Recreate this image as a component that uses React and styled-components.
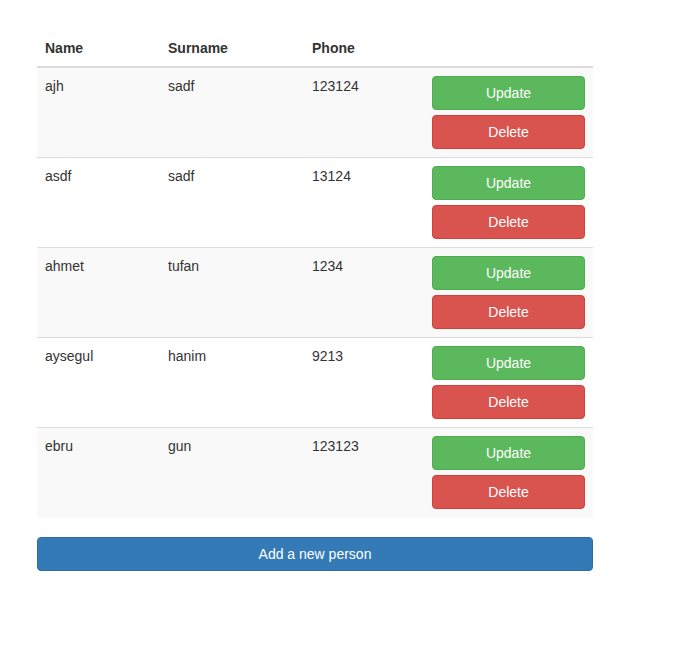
import React from "react";
import styled, { createGlobalStyle } from "styled-components";

const Global = createGlobalStyle`
  html, body { margin: 0; padding: 0; background: #fff; }
  body {
    font-family: "Liberation Sans", Arial, sans-serif;
    font-size: 14px;
    line-height: 1.42857143;
    color: #333;
  }
  * { box-sizing: border-box; }
`;

const Page = styled.div`
  padding: 30px 0 0 37px;
  width: 593px;
`;

const Table = styled.table`
  width: 556px;
  border-collapse: collapse;
  border-spacing: 0;
  table-layout: fixed;
`;

const Th = styled.th`
  text-align: left;
  font-weight: bold;
  padding: 8px;
  line-height: 20px;
  vertical-align: bottom;
  border-bottom: 2px solid #ddd;
  width: ${(p) => p.$w}px;
`;

const Tr = styled.tr`
  background: ${(p) => (p.$odd ? "#f9f9f9" : "#fff")};
`;

const Td = styled.td`
  padding: 8px;
  line-height: 20px;
  vertical-align: top;
  border-top: ${(p) => (p.$first ? "none" : "1px solid #ddd")};
`;

const Btn = styled.button`
  display: block;
  width: 100%;
  height: 34px;
  padding: 6px 12px;
  margin: ${(p) => (p.$stacked ? "5px 0 0" : "0")};
  font-family: "Liberation Sans", Arial, sans-serif;
  font-size: 14px;
  line-height: 20px;
  color: #fff;
  border-radius: 4px;
  cursor: pointer;
  background: ${(p) => p.$bg};
  border: 1px solid ${(p) => p.$bd};
`;

const AddBtn = styled(Btn)`
  width: 556px;
  margin-top: 20px;
`;

const people = [
  ["ajh", "sadf", "123124"],
  ["asdf", "sadf", "13124"],
  ["ahmet", "tufan", "1234"],
  ["aysegul", "hanim", "9213"],
  ["ebru", "gun", "123123"],
];

export default function App() {
  return (
    <Page>
      <Global />
      <Table>
        <thead>
          <tr>
            <Th $w={123}>Name</Th>
            <Th $w={144}>Surname</Th>
            <Th $w={120}>Phone</Th>
            <Th $w={169}></Th>
          </tr>
        </thead>
        <tbody>
          {people.map((p, i) => (
            <Tr key={i} $odd={i % 2 === 0}>
              <Td $first={i === 0}>{p[0]}</Td>
              <Td $first={i === 0}>{p[1]}</Td>
              <Td $first={i === 0}>{p[2]}</Td>
              <Td $first={i === 0}>
                <Btn $bg="#5cb85c" $bd="#4cae4c">Update</Btn>
                <Btn $stacked $bg="#d9534f" $bd="#d43f3a">Delete</Btn>
              </Td>
            </Tr>
          ))}
        </tbody>
      </Table>
      <AddBtn $bg="#337ab7" $bd="#2e6da4">Add a new person</AddBtn>
    </Page>
  );
}
